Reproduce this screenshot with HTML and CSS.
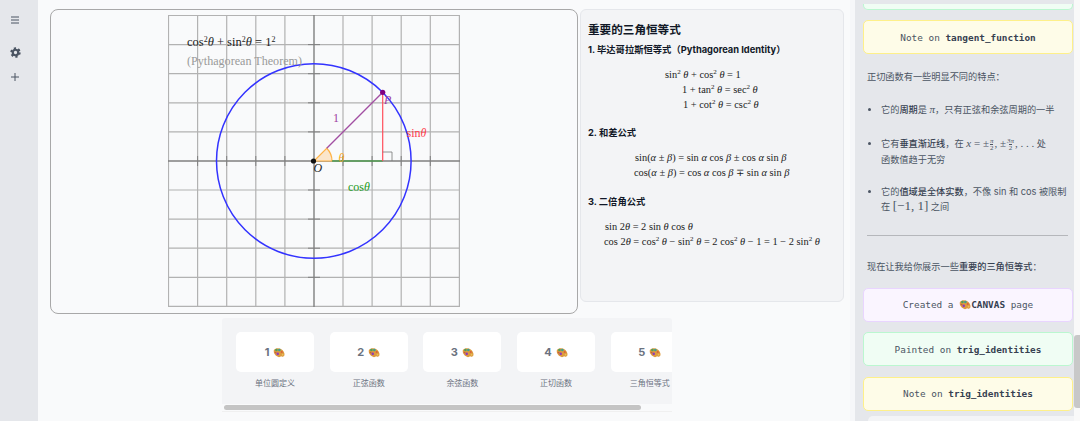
FILE: index.html
```html
<html>
<head>
  <meta charset="utf-8">
  <link rel="stylesheet" href="styles.css">
</head>
<body>
  <svg class="defs" width="0" height="0">
    <symbol id="palette" viewBox="0 0 14 12">
      <path d="M1 3.2C3 .4 7.4.2 10.2 2.4c2 1.5 3.6 4 3.2 6.6-.4 2-2.2 2.2-3.4 1.6-1-.5-1.6.8-3 .9C4 11 0 7.6 1 3.2z" fill="#dd9a3e"/>
      <circle cx="4" cy="3" r="1.5" fill="#4f9e5a"/>
      <circle cx="7.4" cy="3" r="1.5" fill="#3d9f8f"/>
      <circle cx="10.2" cy="5.4" r="1.2" fill="#d9603a"/>
      <circle cx="5.5" cy="7.6" r="1.5" fill="#8e3bb8"/>
      <circle cx="3" cy="6" r="1" fill="#c65a3c"/>
      <circle cx="11.2" cy="8.6" r="1" fill="#e8c25a"/>
    </symbol>
  </svg>

  <div class="app">
    <!-- Left rail -->
    <aside class="rail">
      <svg class="rail-icon menu-icon" viewBox="0 0 10 8"><path d="M1 1h8M1 4h8M1 7h8"/></svg>
      <svg class="rail-icon gear-icon" viewBox="0 0 12 12">
        <circle class="gear-teeth" cx="6" cy="6" r="4.6"/>
        <circle class="gear-ring" cx="6" cy="6" r="3"/>
      </svg>
      <svg class="rail-icon plus-icon" viewBox="0 0 10 10"><path d="M5 1v8M1 5h8"/></svg>
    </aside>

    <main class="main">
      <div class="top-row">
        <!-- Unit circle canvas -->
        <section class="canvas-card">
          <svg class="diagram" width="292" height="292" viewBox="0 0 292 292">
            <path class="grid" d="M.5 0V291M29.6 0V291M58.7 0V291M87.8 0V291M116.9 0V291M175 0V291M204.1 0V291M233.2 0V291M262.3 0V291M291.4 0V291M0 .5H292M0 29.6H292M0 58.7H292M0 87.8H292M0 116.9H292M0 175H292M0 204.1H292M0 233.2H292M0 262.3H292M0 291.4H292"/>
            <path class="axis" d="M146 0V292M0 146H292"/>
            <path class="ticks" d="M29.6 141V151M58.7 141V151M87.8 141V151M116.9 141V151M175 141V151M204.1 141V151M233.2 141V151M262.3 141V151M140 29.6H152M140 58.7H152M140 87.8H152M140 116.9H152M140 175H152M140 204.1H152M140 233.2H152M140 262.3H152"/>
            <circle class="unit-circle" cx="145.8" cy="146" r="97.3"/>
            <path class="angle" d="M146 146H164A18 18 0 0 0 158.7 133.3Z"/>
            <path class="cos-line" d="M164 146H214.7"/>
            <path class="sin-line" d="M214.7 77.3V146"/>
            <path class="radius-line" d="M158.7 133.3L214.7 77.3"/>
            <path class="right-mark" d="M214.7 137H224V146"/>
            <circle class="origin-dot" cx="145.5" cy="146" r="2.6"/>
            <circle class="p-dot" cx="214.7" cy="77.3" r="2.6"/>

            <text class="eq" x="19" y="31">cos<tspan class="sup" dy="-4">2</tspan><tspan dy="4" font-style="italic">θ</tspan> + sin<tspan class="sup" dy="-4">2</tspan><tspan dy="4" font-style="italic">θ</tspan> = 1<tspan class="sup" dy="-4">2</tspan></text>
            <text class="eq-note" x="19" y="50">(Pythagorean Theorem)</text>
            <text class="lbl lbl-purple" x="165" y="107">1</text>
            <text class="lbl lbl-orange" x="170.500" y="147" font-style="italic">θ</text>
            <text class="lbl lbl-red" x="238.500" y="122">sin<tspan font-style="italic">θ</tspan></text>
            <text class="lbl lbl-green" x="180" y="176">cos<tspan font-style="italic">θ</tspan></text>
            <text class="lbl lbl-black" x="145.500" y="157" font-style="italic">O</text>
            <text class="lbl lbl-purple" x="216" y="89" font-style="italic">P</text>
          </svg>
        </section>

        <!-- Identities document -->
        <section class="doc-card">
          <h1 class="doc-title">重要的三角恒等式</h1>
          <h2 class="doc-heading">1. 毕达哥拉斯恒等式（Pythagorean Identity）</h2>
          <div class="math-block">
            <div class="math-line in-77">sin<sup>2</sup> <i>θ</i> + cos<sup>2</sup> <i>θ</i> = 1</div>
            <div class="math-line in-94">1 + tan<sup>2</sup> <i>θ</i> = sec<sup>2</sup> <i>θ</i></div>
            <div class="math-line in-95">1 + cot<sup>2</sup> <i>θ</i> = csc<sup>2</sup> <i>θ</i></div>
          </div>
          <h2 class="doc-heading">2. 和差公式</h2>
          <div class="math-block">
            <div class="math-line in-47">sin(<i>α</i> ± <i>β</i>) = sin <i>α</i> cos <i>β</i> ± cos <i>α</i> sin <i>β</i></div>
            <div class="math-line in-46">cos(<i>α</i> ± <i>β</i>) = cos <i>α</i> cos <i>β</i> ∓ sin <i>α</i> sin <i>β</i></div>
          </div>
          <h2 class="doc-heading">3. 二倍角公式</h2>
          <div class="math-block">
            <div class="math-line in-17">sin 2<i>θ</i> = 2 sin <i>θ</i> cos <i>θ</i></div>
            <div class="math-line in-16">cos 2<i>θ</i> = cos<sup>2</sup> <i>θ</i> − sin<sup>2</sup> <i>θ</i> = 2 cos<sup>2</sup> <i>θ</i> − 1 = 1 − 2 sin<sup>2</sup> <i>θ</i></div>
          </div>
        </section>
      </div>

      <!-- Page thumbnails -->
      <div class="strip-wrap">
        <div class="strip">
          <div class="thumb">
            <div class="thumb-box">1 <svg class="palette"><use href="#palette"/></svg></div>
            <div class="thumb-label">单位圆定义</div>
          </div>
          <div class="thumb">
            <div class="thumb-box">2 <svg class="palette"><use href="#palette"/></svg></div>
            <div class="thumb-label">正弦函数</div>
          </div>
          <div class="thumb">
            <div class="thumb-box">3 <svg class="palette"><use href="#palette"/></svg></div>
            <div class="thumb-label">余弦函数</div>
          </div>
          <div class="thumb">
            <div class="thumb-box">4 <svg class="palette"><use href="#palette"/></svg></div>
            <div class="thumb-label">正切函数</div>
          </div>
          <div class="thumb">
            <div class="thumb-box">5 <svg class="palette"><use href="#palette"/></svg></div>
            <div class="thumb-label">三角恒等式</div>
          </div>
        </div>
        <div class="strip-track"><div class="strip-thumb"></div></div>
      </div>
    </main>

    <!-- Chat column -->
    <aside class="chat">
      <div class="chat-scroll">
        <div class="tool-card tool-green tool-cut"></div>
        <div class="tool-card tool-yellow"><span>Note on <b>tangent_function</b></span></div>
        <p class="chat-text">正切函数有一些明显不同的特点：</p>
        <ul class="chat-list">
          <li>它的<b>周期</b>是 <i class="serif">π</i>，只有正弦和余弦周期的一半</li>
          <li class="has-frac">它有<b>垂直渐近线</b>，在 <span class="serif"><i>x</i> = ±<span class="frac"><i>π</i><i class="frac-low">2</i></span>, ±<span class="frac"><i>3π</i><i class="frac-low">2</i></span>, . . .</span> 处<br>函数值趋于无穷</li>
          <li>它的<b>值域是全体实数</b>，不像 sin 和 cos 被限制<br>在 <span class="serif range">[−1, 1]</span> 之间</li>
        </ul>
        <hr class="chat-rule">
        <p class="chat-text chat-intro">现在让我给你展示一些<b>重要的三角恒等式</b>：</p>
        <div class="tool-card tool-purple"><span>Created a <svg class="palette"><use href="#palette"/></svg><b>CANVAS</b> page</span></div>
        <div class="tool-card tool-green"><span>Painted on <b>trig_identities</b></span></div>
        <div class="tool-card tool-yellow"><span>Note on <b>trig_identities</b></span></div>
        <div class="next-card"></div>
      </div>
      <div class="chat-track"><div class="chat-thumb"></div></div>
    </aside>
  </div>
</body>
</html>
```

FILE: styles.css
```css
* {
  box-sizing: border-box;
  margin: 0;
  padding: 0;
}

html, body {
  height: 100%;
  overflow: hidden;
}

body {
  background-color: #f9fafb;
  font-family: Inter, "Noto Sans CJK SC", sans-serif;
  color: #1f2937;
}

.defs {
  position: absolute;
}

.app {
  display: flex;
  height: 421px;
}

/* Left rail */
.rail {
  width: 38px;
  flex-shrink: 0;
  background-color: #e5e7eb;
  display: flex;
  flex-direction: column;
  align-items: center;
  padding: 0 8px 0 0;
}

.rail-icon {
  display: block;
  fill: none;
  stroke: #4b5563;
}

.menu-icon {
  width: 10px;
  height: 8px;
  margin-top: 16px;
  stroke-width: 1;
}

.gear-icon {
  width: 11px;
  height: 11px;
  margin-top: 23px;
}

.gear-teeth {
  stroke-width: 2.2;
  stroke-dasharray: 2.4 2.42;
}

.gear-ring {
  stroke-width: 2.4;
}

.plus-icon {
  width: 10px;
  height: 10px;
  margin-top: 14px;
  stroke-width: 1;
}

/* Main area */
.main {
  width: 812px;
  flex-shrink: 0;
  padding: 9px 6px 0 12px;
}

.top-row {
  display: flex;
  align-items: flex-start;
  gap: 2px;
}

.canvas-card {
  width: 528px;
  height: 305px;
  background-color: #f9fafb;
  border: 1px solid #a8a8a8;
  border-radius: 8px;
  display: flex;
  justify-content: center;
  padding-top: 5px;
}

.diagram {
  display: block;
  font-family: "Liberation Serif", serif;
}

.grid {
  fill: none;
  stroke: #b2b2b2;
  stroke-width: 1.2;
}

.axis {
  fill: none;
  stroke: #808080;
  stroke-width: 1.4;
}

.ticks {
  fill: none;
  stroke: #808080;
  stroke-width: 1;
}

.unit-circle {
  fill: none;
  stroke: #3333ff;
  stroke-width: 1.5;
}

.angle {
  fill: #fbe6cb;
  stroke: #ffb347;
  stroke-width: 1.2;
}

.cos-line {
  stroke: #2f9e2f;
  stroke-width: 1.2;
}

.sin-line {
  stroke: #ff4d5a;
  stroke-width: 1.2;
}

.radius-line {
  stroke: #a24ea2;
  stroke-width: 1.3;
}

.right-mark {
  fill: none;
  stroke: #777;
  stroke-width: 0.8;
}

.origin-dot {
  fill: #111;
}

.p-dot {
  fill: #800080;
}

.eq {
  font-size: 12.5px;
  fill: #222;
}

.sup {
  font-size: 8px;
}

.eq-note {
  font-size: 12.1px;
  fill: #9a9a9a;
}

.lbl {
  font-size: 12px;
}

.lbl-purple { fill: #a03ea0; }
.lbl-orange { fill: #f5a623; }
.lbl-red { fill: #ff3b4a; }
.lbl-green { fill: #249a24; }
.lbl-black { fill: #222; }

/* Identities document */
.doc-card {
  width: 264px;
  height: 293px;
  background-color: #f3f4f6;
  border: 1px solid #e5e7eb;
  border-radius: 6px;
  padding: 12px 7px 0;
}

.doc-title {
  font-size: 11.6px;
  line-height: 16px;
  font-weight: 700;
  color: #111827;
}

.doc-heading {
  font-size: 9.3px;
  line-height: 14px;
  font-weight: 700;
  color: #111827;
  margin-top: 5px;
}

.math-block {
  font-family: "Liberation Serif", serif;
  font-size: 10.4px;
  line-height: 14.8px;
  color: #222;
  padding: 11px 0 14px;
  white-space: nowrap;
}

.math-block + .doc-heading {
  margin-top: 0;
}

.math-block sup {
  font-size: 7px;
  line-height: 0;
}

.in-77 { padding-left: 77px; }
.in-94 { padding-left: 94px; }
.in-95 { padding-left: 95px; }
.in-47 { padding-left: 47px; }
.in-46 { padding-left: 46px; }
.in-17 { padding-left: 17px; }
.in-16 { padding-left: 16px; }

/* Page thumbnails */
.strip-wrap {
  width: 450px;
  margin: 4px auto 0;
  overflow: hidden;
}

.strip {
  display: flex;
  gap: 15.7px;
  height: 86px;
  background-color: #f3f4f6;
  border-radius: 3px 3px 0 0;
  padding: 14px 0 0 14px;
}

.thumb {
  width: 78px;
  flex-shrink: 0;
  text-align: center;
}

.thumb-box {
  height: 40px;
  background-color: #fff;
  border-radius: 5px;
  display: flex;
  align-items: center;
  justify-content: center;
  gap: 4px;
  font-size: 11px;
  font-weight: 700;
  color: #6b7280;
}

.thumb-label {
  font-size: 8px;
  line-height: 12px;
  margin-top: 5px;
  color: #6b7280;
  white-space: nowrap;
}

.palette {
  width: 12px;
  height: 11px;
  vertical-align: -2px;
}

.strip-track {
  height: 8px;
  padding: 1px 0 1px 2px;
  border-bottom: 1px solid #f0f0f0;
}

.strip-thumb {
  width: 417px;
  height: 5px;
  background-color: #c4c4c4;
  border-radius: 2.5px;
}

/* Chat column */
.chat {
  flex: 1;
  display: flex;
  overflow: hidden;
  padding-left: 5px;
  background-color: #f6f7f9;
}

.chat-scroll {
  width: 219px;
  height: 421px;
  flex-shrink: 0;
  overflow: hidden;
  background-color: #e5e7eb;
  padding: 4px 1px 0 8px;
}

.tool-card {
  height: 34px;
  border: 1px solid;
  border-radius: 5px;
  display: flex;
  align-items: center;
  justify-content: center;
  font-family: "DejaVu Sans Mono", monospace;
  font-size: 9.4px;
  color: #4b5563;
  white-space: pre;
  margin-bottom: 10.4px;
}

.tool-card b {
  color: #374151;
}

.tool-cut {
  height: 6px;
  border-top: 0;
  border-radius: 0 0 5px 5px;
}

.tool-green {
  background-color: #f0fdf4;
  border-color: #bbf7d0;
}

.tool-yellow {
  background-color: #fefce8;
  border-color: #fef08a;
}

.tool-purple {
  background-color: #faf5ff;
  border-color: #e9d5ff;
}

.chat-text {
  font-size: 9.2px;
  line-height: 15px;
  color: #4b5563;
  padding-left: 4px;
  margin-top: 15px;
}

.chat-text b,
.chat-list b {
  font-weight: 500;
  color: #374151;
}

.chat-list {
  font-size: 9.2px;
  line-height: 15px;
  color: #4b5563;
  padding: 18px 0 0 18px;
  white-space: nowrap;
}

.chat-list li {
  margin-bottom: 17px;
}

.chat-list .has-frac {
  padding-top: 2px;
}

.serif {
  font-family: "Liberation Serif", serif;
  font-size: 11px;
  line-height: 0;
}

.range {
  font-size: 13px;
}

.frac {
  display: inline-flex;
  flex-direction: column;
  align-items: center;
  vertical-align: middle;
  font-size: 7px;
  line-height: 6.5px;
  margin: 0 1px;
}

.frac-low {
  font-style: normal;
  border-top: 0.5px solid #4b5563;
}

.chat-rule {
  border: 0;
  border-top: 1px solid #b5b7bb;
  margin: 21px 5px 0 4px;
}

.chat-intro {
  margin: 23px 0 14px;
}

.next-card {
  width: 240px;
  height: 30px;
  margin: -5px 0 0 5px;
  background-color: #f3f4f6;
  border-radius: 5px 0 0 0;
}

.chat-track {
  flex: 1;
  background-color: #f9f9f9;
  padding-top: 335px;
}

.chat-thumb {
  height: 73px;
  background-color: #c8c8c8;
  border-radius: 3px 0 0 3px;
}
```
